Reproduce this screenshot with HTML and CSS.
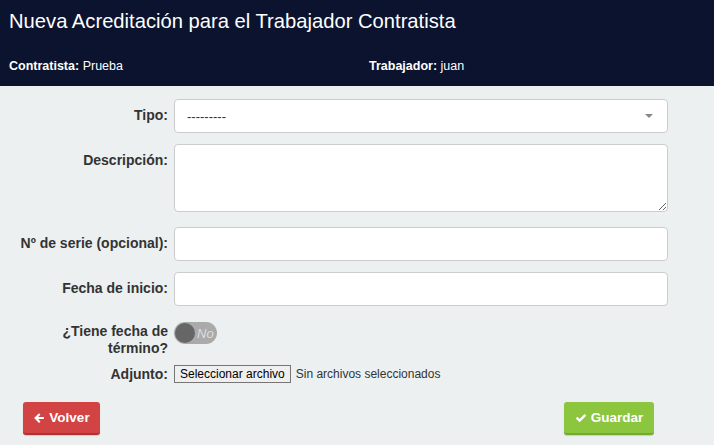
FILE: index.html
```html
<!DOCTYPE html>
<html lang="es">
<head>
<meta charset="utf-8">
<title>Nueva Acreditación</title>
<link rel="stylesheet" href="styles.css">
</head>
<body>
<header class="top">
  <h1 class="title">Nueva Acreditación para el Trabajador Contratista</h1>
  <div class="info">
    <div><b>Contratista:</b> Prueba</div>
    <div><b>Trabajador:</b> juan</div>
  </div>
</header>
<form class="form">
  <div class="row">
    <label class="lbl">Tipo:</label>
    <div class="field">
      <div class="select">
        <span>---------</span>
        <span class="caret"></span>
      </div>
    </div>
  </div>
  <div class="row row-ta">
    <label class="lbl">Descripción:</label>
    <div class="field"><textarea class="ta"></textarea></div>
  </div>
  <div class="row">
    <label class="lbl">Nº de serie (opcional):</label>
    <div class="field"><input class="inp" type="text"></div>
  </div>
  <div class="row">
    <label class="lbl">Fecha de inicio:</label>
    <div class="field"><input class="inp" type="text"></div>
  </div>
  <div class="row row-toggle">
    <label class="lbl lbl-toggle">¿Tiene fecha de término?</label>
    <div class="field">
      <div class="toggle"><span class="knob"></span><span class="no">No</span></div>
    </div>
  </div>
  <div class="row row-file">
    <label class="lbl lbl-file">Adjunto:</label>
    <div class="field file">
      <span class="filebtn">Seleccionar archivo</span>
      <span class="filetxt">Sin archivos seleccionados</span>
    </div>
  </div>
  <div class="actions">
    <button type="button" class="btn btn-red">
      <svg class="ico" viewBox="0 0 16 16" width="12" height="12"><path d="M8 1.5 L1.5 8 L8 14.5 L10 12.5 L6.8 9.4 H14.5 V6.6 H6.8 L10 3.5 Z" fill="#fff"/></svg>
      Volver
    </button>
    <button type="button" class="btn btn-green">
      <svg class="ico" viewBox="0 0 16 16" width="12" height="12"><path d="M1 8.5 L3.2 6.3 L6.2 9.3 L12.8 2.7 L15 4.9 L6.2 13.7 Z" fill="#fff"/></svg>
      Guardar
    </button>
  </div>
</form>
</body>
</html>
```
FILE: styles.css
```css
* { box-sizing: border-box; }
html, body { margin: 0; padding: 0; }
body {
  background: #ecf0f1;
  font-family: "Liberation Sans", Arial, sans-serif;
  color: #333;
  width: 714px;
  height: 445px;
  overflow: hidden;
}
.top {
  background: #0b132e;
  color: #fff;
  height: 86px;
  padding: 0 9px;
}
.title {
  margin: 0;
  padding-top: 9px;
  font-size: 20.2px;
  font-weight: normal;
  line-height: 24px;
}
.info {
  display: grid;
  grid-template-columns: 360px 1fr;
  font-size: 12.5px;
  margin-top: 26px;
  line-height: 14px;
}
.form {
  padding-top: 13px;
}
.row {
  display: flex;
  align-items: flex-start;
  margin-bottom: 11px;
}
.row-ta { margin-bottom: 15px; }
.lbl {
  width: 168px;
  padding-left: 15px;
  padding-right: 0;
  text-align: right;
  font-weight: bold;
  font-size: 14px;
  line-height: 20px;
  padding-top: 6px;
  margin-right: 6px;
  flex: none;
}
.field {
  width: 494px;
}
.select, .inp, .ta {
  display: block;
  width: 494px;
  height: 34px;
  background: #fff;
  border: 1px solid #ccc;
  border-radius: 4px;
  margin: 0;
  font-family: inherit;
}
.select {
  display: flex;
  align-items: center;
  justify-content: space-between;
  padding: 0 12px 0 12px;
  font-size: 13px;
  color: #333;
}
.caret {
  width: 0; height: 0;
  border-left: 4px solid transparent;
  border-right: 4px solid transparent;
  border-top: 4px solid #888;
  margin-right: 2px;
}
.ta {
  height: 68px;
  resize: vertical;
}
.row-toggle { margin-top: 16px; margin-bottom: 8px; }
.lbl-toggle { padding-top: 1px; padding-left: 20px; line-height: 17px; }
.toggle {
  width: 43px;
  height: 22px;
  border-radius: 11px;
  background: #aaa;
  display: flex;
  align-items: center;
  padding: 1px;
}
.knob {
  width: 20px; height: 20px;
  border-radius: 50%;
  background: #666;
  flex: none;
}
.no {
  color: #ddd;
  font-style: italic;
  font-size: 13px;
  margin-left: 2px;
}
.row-file { margin-bottom: 0; }
.lbl-file { padding-top: 0; line-height: 18px; }
.file {
  display: flex;
  align-items: center;
  font-size: 12px;
  height: 18px;
}
.filebtn {
  border: 1px solid #767676;
  background: #efefef;
  color: #000;
  height: 18px;
  line-height: 16px;
  padding: 0 5px;
  font-size: 12px;
  border-radius: 0;
  margin-right: 5px;
}
.filetxt { color: #333; }
.actions {
  display: flex;
  justify-content: space-between;
  padding: 0 60px 0 23px;
  margin-top: 19px;
}
.btn {
  font-family: inherit;
  font-weight: bold;
  font-size: 13.5px;
  color: #fff;
  border: none;
  border-radius: 3px;
  height: 33px;
  display: flex;
  align-items: center;
  justify-content: center;
  gap: 4px;
  cursor: pointer;
  padding: 0;
}
.btn-red {
  width: 77px;
  background: #d24343;
  border-bottom: 2px solid #b03333;
  box-shadow: 0 1px 1px rgba(0,0,0,0.15);
}
.btn-green {
  width: 90px;
  background: #8cc63e;
  border-bottom: 2px solid #75a932;
  box-shadow: 0 1px 1px rgba(0,0,0,0.15);
}
.ico { display: block; }
```
